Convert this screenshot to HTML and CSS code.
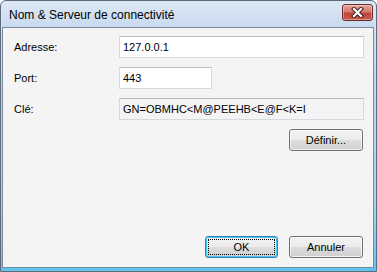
FILE: index.html
```html
<!DOCTYPE html>
<html lang="fr">
<head>
  <meta charset="UTF-8">
  <title>Nom &amp; Serveur de connectivité</title>
  <link rel="stylesheet" href="styles.css">
</head>
<body>
  <div class="window">
    <div class="titlebar">
      <span class="title">Nom &amp; Serveur de connectivité</span>
      <button class="close-btn" aria-label="Fermer">
        <svg width="13" height="11" viewBox="0 0 13 11">
          <path d="M3 2 L10 9 M10 2 L3 9" stroke="#4a2020" stroke-width="4.2" stroke-linecap="square"/>
          <path d="M3 2 L10 9 M10 2 L3 9" stroke="#ffffff" stroke-width="2.2" stroke-linecap="square"/>
        </svg>
      </button>
    </div>

    <div class="client">
      <div class="form-grid">
        <label class="lbl">Adresse:</label>
        <div class="field">127.0.0.1</div>

        <label class="lbl">Port:</label>
        <div class="field field-short">443</div>

        <label class="lbl">Clé:</label>
        <div class="field field-readonly">GN=OBMHC&lt;M@PEEHB&lt;E@F&lt;K=I</div>
      </div>

      <div class="row-right">
        <button class="btn">Définir...</button>
      </div>

      <div class="footer">
        <button class="btn btn-default"><span>OK</span></button>
        <button class="btn">Annuler</button>
      </div>
    </div>
  </div>
</body>
</html>
```

FILE: styles.css
```css
body {
  margin: 0;
  padding: 0;
  background: #ffffff;
  font-family: 'Liberation Sans', Arial, sans-serif;
  font-size: 11px;
  color: #000;
}

.window {
  width: 377px;
  height: 272px;
  box-sizing: border-box;
  display: flex;
  flex-direction: column;
  border: 1px solid #5d6b7c;
  border-radius: 6px 6px 0 0;
  padding: 0 2px 3px 1px;
  background: linear-gradient(180deg, #dbe7f5 0%, #c4d7ee 30%, #a9d3f0 75%, #5cc3ee 100%);
}

.titlebar {
  height: 26px;
  display: flex;
  align-items: flex-start;
  justify-content: space-between;
  padding-left: 7px;
  background: linear-gradient(180deg, #dce8f5 0%, #c9daef 100%);
  border-radius: 5px 5px 0 0;
}

.title {
  font-size: 12px;
  line-height: 12px;
  margin-top: 8px;
  color: #000;
}

.close-btn {
  width: 31px;
  height: 17px;
  margin-top: 3px;
  margin-right: 1px;
  padding: 0;
  display: flex;
  align-items: center;
  justify-content: center;
  border: 1px solid #6b2b2b;
  border-radius: 3px;
  background: linear-gradient(180deg, #e6a69c 0%, #d67a6d 45%, #c0463a 55%, #c9594b 100%);
  box-shadow: inset 0 0 0 1px rgba(255, 255, 255, 0.35);
}

.client {
  flex: 1;
  display: flex;
  flex-direction: column;
  border: 1px solid #7a8ba0;
  background: #f4f4f4;
  padding: 8px 9px 9px 11px;
}

.form-grid {
  display: grid;
  grid-template-columns: 105px 1fr;
  grid-auto-rows: 22px;
  row-gap: 9px;
  align-items: center;
}

.lbl {
  color: #000;
}

.field {
  height: 22px;
  box-sizing: border-box;
  border: 1px solid #d5dae0;
  border-top-color: #b5bcc4;
  background: #ffffff;
  padding: 0 3px;
  line-height: 20px;
  white-space: nowrap;
  overflow: hidden;
}

.field-short {
  width: 93px;
}

.field-readonly {
  background: #f4f4f4;
}

.row-right {
  display: flex;
  justify-content: flex-end;
  margin-top: 9px;
  padding-right: 1px;
}

.footer {
  margin-top: auto;
  display: flex;
  justify-content: flex-end;
  gap: 11px;
  padding-right: 1px;
}

.btn {
  width: 74px;
  height: 22px;
  box-sizing: border-box;
  padding: 0;
  font-family: 'Liberation Sans', Arial, sans-serif;
  font-size: 11px;
  color: #000;
  border: 1px solid #707070;
  border-radius: 3px;
  background: linear-gradient(180deg, #f2f2f2 0%, #ebebeb 49%, #dddddd 51%, #cfcfcf 100%);
  box-shadow: inset 0 0 0 1px rgba(255, 255, 255, 0.7);
}

.btn-default {
  width: 73px;
  border-color: #3c7fb1;
  box-shadow: inset 0 0 0 1px #48c4f0;
  padding: 2px;
}

.btn-default span {
  display: flex;
  align-items: center;
  justify-content: center;
  height: 100%;
  box-sizing: border-box;
  border: 1px dotted #000;
}
```
